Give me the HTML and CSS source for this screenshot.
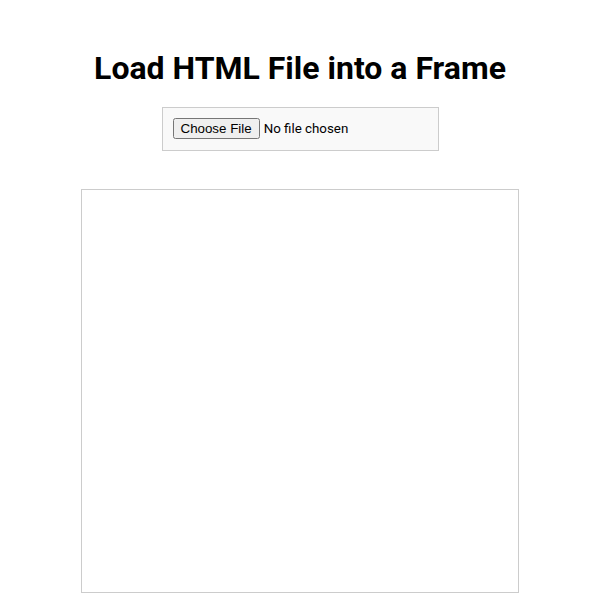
FILE: index.html
```html
<!DOCTYPE html>
<html>
<head>
<meta charset="utf-8">
<link rel="stylesheet" href="styles.css">
</head>
<body>
<div class="page">
  <h1 class="title">Load HTML File into a Frame</h1>
  <div class="upload">
    <input type="file" class="file-input">
  </div>
  <iframe class="frame"></iframe>
</div>
</body>
</html>
```

FILE: styles.css
```css
body {
  margin: 8px;
  font-family: Roboto, "Liberation Sans", sans-serif;
  background: #fff;
}
.page {
  padding: 20px;
  text-align: center;
}
.title {
  font-size: 32px;
  font-weight: 700;
  margin: 21px 0 20px;
  color: #000;
}
.upload {
  display: inline-block;
  padding: 10px 10px 11px;
  background: #f9f9f9;
  border: 1px solid #ccc;
  margin-bottom: 38px;
}
.file-input {
  font-family: Roboto, "Liberation Sans", sans-serif;
  font-size: 13.333px;
}
.frame {
  display: block;
  margin: 0 auto;
  width: 80%;
  height: 402px;
  border: 1px solid #ccc;
}
```
